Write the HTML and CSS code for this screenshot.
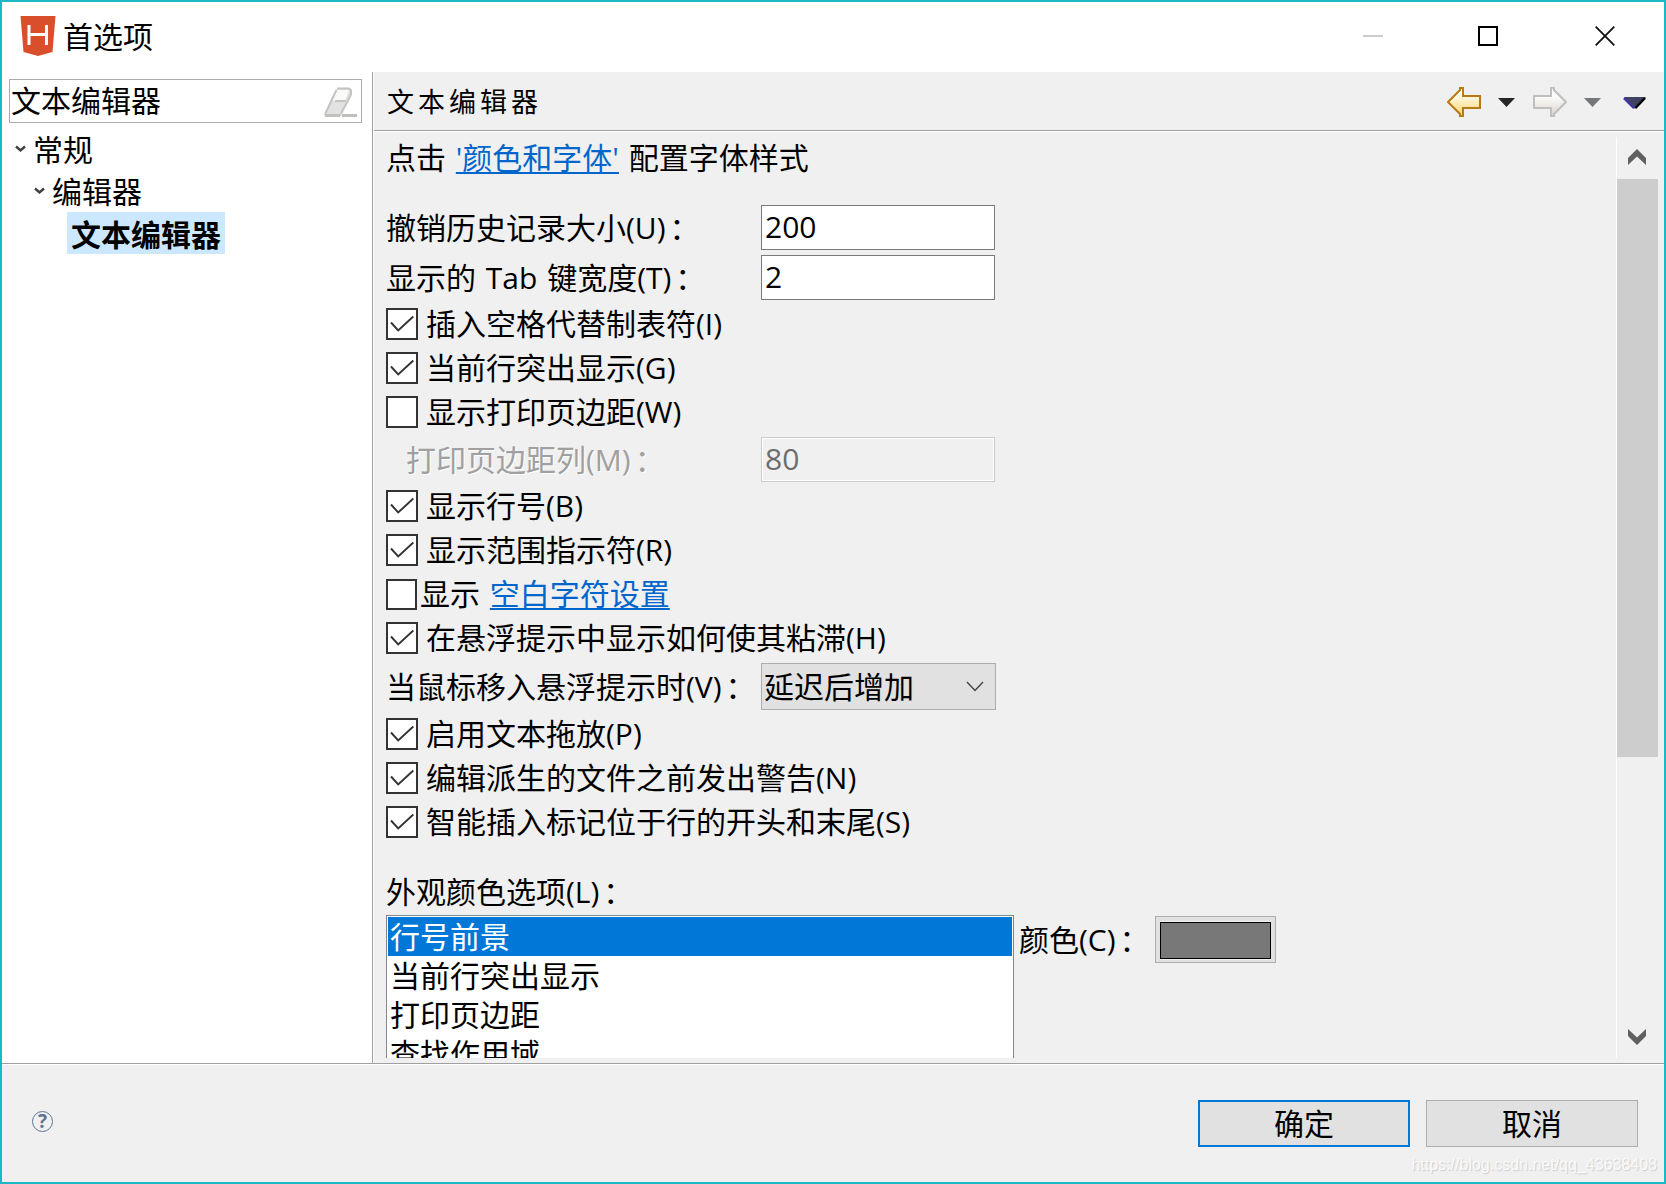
FILE: index.html
```
<!DOCTYPE html>
<html lang="zh-CN">
<head>
  <meta charset="UTF-8" />
  <meta name="viewport" content="width=device-width, initial-scale=1.0"/>
  <title>首选项</title>
  <link rel="stylesheet" href="styles.css">
</head>
<body>
  <svg width="0" height="0" class="defs">
    <symbol id="tick" viewBox="0 0 28 28"><path d="M3 12.500l7.200 8L25.300 6.500" fill="none" stroke="#333" stroke-width="1.900"/></symbol>
  </svg>
  <div class="window">
    <div class="titlebar">
      <svg class="logo" width="36" height="40" viewBox="0 0 36 40">
        <path d="M.5 0h35l-3 36L18 40 3.500 36z" fill="#d94f2b"/>
        <path d="M9 9v20M26.500 9v20M9 18.500h17.500" fill="none" stroke="#fff" stroke-width="3"/>
      </svg>
      <span class="title">首选项</span>
      <div class="winbtns">
        <svg width="20" height="20" viewBox="0 0 20 20"><path d="M0 10h20" stroke="#ccc" stroke-width="2"/></svg>
        <svg width="20" height="20" viewBox="0 0 20 20"><path d="M1 1h18v18H1z" fill="none" stroke="#000" stroke-width="2"/></svg>
        <svg width="20" height="20" viewBox="0 0 20 20"><path d="M.7.7l18.600 18.600M19.300.7L.7 19.300" fill="none" stroke="#111" stroke-width="1.800"/></svg>
      </div>
    </div>

    <div class="main">
      <div class="sidebar">
        <div class="search">
          <span>文本编辑器</span>
          <svg width="33" height="31" viewBox="0 0 33 31">
            <path d="M13 1h12l2 2-2 9-8 17H1v-3L10 9z" fill="#e2e2e0"/>
            <path d="M13 3h12l-4 11H9z" fill="#fafafa"/>
            <path d="M13 1.500h12l2 2v4l-3 6-7 13M12.500 3L9 10l-5 11-2.500 5v2H17M11 14h11" fill="none" stroke="#c4c4c0" stroke-width="2"/>
            <path d="M1 28.500h15M18 28.500h15" stroke="#c0c0bc" stroke-width="3"/>
          </svg>
        </div>
        <div class="tree">
          <div class="node"><svg width="11" height="8" viewBox="0 0 11 8"><path d="M1 1.500l4.500 4 4.500-4" fill="none" stroke="#404040" stroke-width="2.400"/></svg><span>常规</span></div>
          <div class="node level2"><svg width="11" height="8" viewBox="0 0 11 8"><path d="M1 1.500l4.500 4 4.500-4" fill="none" stroke="#404040" stroke-width="2.400"/></svg><span>编辑器</span></div>
          <div class="node level3"><span class="current">文本编辑器</span></div>
        </div>
      </div>

      <div class="page">
        <div class="page-head">
          <h1>文本编辑器</h1>
          <div class="nav">
            <svg width="34" height="30" viewBox="0 0 34 30">
              <defs>
                <linearGradient id="gold" x1="0" y1="0" x2="0" y2="1"><stop offset="0.2" stop-color="#fffef4"/><stop offset="0.9" stop-color="#fbd978"/></linearGradient>
                <linearGradient id="pale" x1="0" y1="0" x2="0" y2="1"><stop offset="0.3" stop-color="#fdfdfc"/><stop offset="0.9" stop-color="#dedad0"/></linearGradient>
              </defs>
              <path d="M1 15L13 3V1h3v8h17v12H16v8h-3v-2z" fill="url(#gold)" stroke="#b87a14" stroke-width="2"/>
            </svg>
            <svg class="drop" width="17" height="9" viewBox="0 0 17 9"><path d="M0 0h17L8.500 9z" fill="#262626"/></svg>
            <svg class="fwd" width="34" height="30" viewBox="0 0 34 30"><path d="M33 15L21 3V1h-3v8H1v12h17v8h3v-2z" fill="url(#pale)" stroke="#bfbfbf" stroke-width="2"/></svg>
            <svg class="drop" width="17" height="9" viewBox="0 0 17 9"><path d="M0 0h17L8.500 9z" fill="#76777a"/></svg>
            <svg class="menu" width="24" height="12" viewBox="0 0 24 12"><path d="M1 0h22L12 12z" fill="#414162"/><path d="M1 1l10 10" stroke="#4038a0" stroke-width="2.500"/><path d="M22 1L12.500 11" stroke="#000" stroke-width="2.500"/></svg>
          </div>
        </div>

        <div class="page-body">
          <div class="form">
            <div class="linkrow">点击 <a>'颜色和字体'</a> 配置字体样式</div>
            <div class="field"><label>撤销历史记录大小(U)<b>：</b></label><div class="input">200</div></div>
            <div class="field"><label>显示的 Tab 键宽度(T)<b>：</b></label><div class="input">2</div></div>
            <div class="checks">
              <div class="check"><i><svg><use href="#tick"/></svg></i>插入空格代替制表符(I)</div>
              <div class="check"><i><svg><use href="#tick"/></svg></i>当前行突出显示(G)</div>
              <div class="check"><i></i>显示打印页边距(W)</div>
            </div>
            <div class="field disabled"><label>打印页边距列(M)<b>：</b></label><div class="input">80</div></div>
            <div class="checks">
              <div class="check"><i><svg><use href="#tick"/></svg></i>显示行号(B)</div>
              <div class="check"><i><svg><use href="#tick"/></svg></i>显示范围指示符(R)</div>
              <div class="check tight"><i></i>显示&nbsp;<a>空白字符设置</a></div>
              <div class="check"><i><svg><use href="#tick"/></svg></i>在悬浮提示中显示如何使其粘滞(H)</div>
            </div>
            <div class="field combo-field">
              <label>当鼠标移入悬浮提示时(V)<b>：</b></label>
              <div class="combo">延迟后增加<svg width="18" height="11" viewBox="0 0 18 11"><path d="M1 1l8 8.500L17 1" fill="none" stroke="#444" stroke-width="1.400"/></svg></div>
            </div>
            <div class="checks">
              <div class="check"><i><svg><use href="#tick"/></svg></i>启用文本拖放(P)</div>
              <div class="check"><i><svg><use href="#tick"/></svg></i>编辑派生的文件之前发出警告(N)</div>
              <div class="check"><i><svg><use href="#tick"/></svg></i>智能插入标记位于行的开头和末尾(S)</div>
            </div>
            <div class="list-label">外观颜色选项(L)<b>：</b></div>
            <div class="colors">
              <div class="list">
                <div class="item selected">行号前景</div>
                <div class="item">当前行突出显示</div>
                <div class="item">打印页边距</div>
                <div class="item">查找作用域</div>
              </div>
              <div class="color-label">颜色(C)<b>：</b></div>
              <div class="color-btn"><div class="swatch"></div></div>
            </div>
          </div>
          <div class="scrollbar">
            <svg width="18" height="16" viewBox="0 0 18 16"><path d="M0 9l9-9 9 9v7L9 7.500 0 16z" fill="#606060"/></svg>
            <div class="thumb"></div>
            <svg class="down" width="18" height="16" viewBox="0 0 18 16"><path d="M0 7l9 9 9-9V0L9 8.500 0 0z" fill="#606060"/></svg>
          </div>
        </div>
      </div>
    </div>

    <div class="footer">
      <div class="help">?</div>
      <div class="btn primary">确定</div>
      <div class="btn">取消</div>
      <div class="watermark">https://blog.csdn.net/qq_43638408</div>
    </div>
  </div>
</body>
</html>
```
FILE: styles.css
```
* {
  box-sizing: border-box;
}
body {
  margin: 0;
  font-family: "Open Sans", "Noto Sans CJK SC", sans-serif;
  font-size: 30px;
  line-height: 40px;
  word-spacing: 2px;
  color: #000;
  white-space: nowrap;
}
svg {
  display: block;
  flex: none;
}
.defs {
  position: absolute;
}
.window {
  width: 1666px;
  height: 1184px;
  border: 2px solid #19b9c6;
  background: #f0f0f0;
  display: flex;
  flex-direction: column;
  overflow: hidden;
  position: relative;
}
.titlebar {
  height: 70px;
  flex: none;
  background: #fff;
  display: flex;
  align-items: center;
  padding: 0 0 2px 18px;
}
.title {
  margin-left: 7px;
  padding-top: 1px;
}
.winbtns {
  margin-left: auto;
  display: flex;
  gap: 97px;
  padding-right: 49px;
}
.winbtns svg:first-child {
  margin-right: -2px;
}
.main {
  height: 991px;
  flex: none;
  display: flex;
}
.sidebar {
  width: 371px;
  flex: none;
  background: #fff;
  border-right: 1px solid #a0a0a0;
  padding: 7px 10px 0 7px;
}
.search {
  height: 44px;
  border: 1px solid #ababab;
  display: flex;
  align-items: center;
  justify-content: space-between;
  padding: 0 4px 0 1px;
}
.search svg {
  margin-top: 2px;
}
.tree {
  padding-top: 5px;
}
.node {
  height: 42px;
  display: flex;
  align-items: center;
  padding-left: 6px;
}
.node svg {
  margin-right: 7px;
}
.node span {
  padding-top: 1px;
}
.level2 {
  padding-left: 25px;
}
.level3 {
  padding-left: 58px;
}
.node .current {
  background: #cce8ff;
  font-weight: bold;
  height: 42px;
  width: 158px;
  padding: 3px 0 0 4px;
}
.page {
  flex: 1;
  display: flex;
  flex-direction: column;
  border-left: 1px solid #fff;
}
.page-head {
  height: 60px;
  flex: none;
  border-bottom: 1px solid #fff;
  box-shadow: inset 0 -1px #a0a0a0;
  display: flex;
  align-items: center;
  justify-content: space-between;
  padding: 1px 17px 0 13px;
}
h1 {
  margin: 0 0 1px;
  font-size: 27px;
  font-weight: normal;
  letter-spacing: 4px;
}
.nav {
  display: flex;
  align-items: center;
}
.drop {
  margin-left: 17px;
}
.fwd {
  margin-left: 18px;
}
.menu {
  margin: 2px 0 0 22px;
}
.page-body {
  height: 931px;
  padding: 5px 5px 5px 12px;
  display: flex;
}
.form {
  flex: 1;
  overflow: hidden;
}
.linkrow {
  height: 42px;
  line-height: 41px;
  margin-bottom: 26px;
}
a {
  color: #0066cc;
  text-decoration: underline;
  text-decoration-thickness: 2px;
  text-underline-offset: 3px;
}
b {
  font-weight: normal;
  margin-left: 4px;
}
.field {
  height: 45px;
  display: flex;
  align-items: center;
  margin-bottom: 5px;
}
.field label {
  width: 375px;
  flex: none;
  padding-top: 1px;
}
.input {
  width: 234px;
  height: 45px;
  line-height: 42px;
  border: 1px solid #7a7a7a;
  background: #fff;
  padding-left: 3px;
}
.field + .checks {
  margin-top: -3px;
}
.check {
  height: 44px;
  display: flex;
  align-items: center;
}
.check i {
  width: 32px;
  height: 32px;
  flex: none;
  margin-right: 8px;
  border: 2px solid #333;
  background: #fff;
}
.check i svg {
  width: 28px;
  height: 28px;
}
.check.tight i {
  width: 31px;
  height: 31px;
  margin-right: 3px;
}
.checks + .field {
  margin-top: 3px;
}
.disabled label {
  padding-left: 20px;
  color: #a0a0a0;
  text-shadow: 1px 1px #fff;
}
.disabled .input {
  background: #f0f0f0;
  border-color: #ccc;
  box-shadow: inset 0 0 0 1px #fff;
  color: #6d6d6d;
}
.combo-field {
  height: 47px;
}
.combo {
  width: 235px;
  height: 47px;
  border: 1px solid #adadad;
  background: #e1e1e1;
  display: flex;
  align-items: center;
  justify-content: space-between;
  padding: 0 11px 0 2px;
}
.list-label {
  margin: 28px 0 3px;
}
.colors {
  display: flex;
  align-items: flex-start;
}
.list {
  width: 628px;
  height: 160px;
  border: 1px solid #828790;
  padding: 1px;
  background: #fff;
}
.item {
  height: 39px;
  line-height: 39px;
  padding-left: 2px;
}
.selected {
  background: #0078d7;
  color: #fff;
}
.color-label {
  width: 141px;
  padding: 5px 0 0 5px;
}
.color-btn {
  width: 121px;
  height: 47px;
  margin-top: 1px;
  border: 1px solid #adadad;
  background: #e1e1e1;
  padding: 4px;
}
.swatch {
  height: 37px;
  margin-top: 1px;
  background: #787878;
  border: 1px solid #000;
  box-shadow: 0 -1px #f0f0f0, 0 1px #f0f0f0;
}
.scrollbar {
  width: 43px;
  border-left: 1px solid #fff;
  display: flex;
  flex-direction: column;
  padding: 12px 0 13px;
}
.scrollbar svg {
  margin-left: 11px;
}
.thumb {
  width: 41px;
  height: 578px;
  background: #cdcdcd;
  margin-top: 14px;
}
.down {
  margin-top: auto;
}
.footer {
  flex: 1;
  border-top: 1px solid #a0a0a0;
  box-shadow: inset 0 1px #fff;
  display: flex;
  justify-content: flex-end;
  align-items: flex-start;
  gap: 16px;
  padding: 36px 26px 0 30px;
}
.help {
  width: 21px;
  height: 21px;
  margin: 11px auto 0 0;
  border: 1px solid #5f7494;
  border-radius: 50%;
  font: bold 19px/19px "Open Sans", sans-serif;
  text-align: center;
  color: #5f7494;
}
.btn {
  width: 212px;
  height: 47px;
  line-height: 45px;
  border: 1px solid #adadad;
  background: #e1e1e1;
  text-align: center;
}
.primary {
  border: 2px solid #0078d7;
  line-height: 43px;
}
.watermark {
  position: absolute;
  right: 7px;
  bottom: 6px;
  font: 16px/22px "Liberation Sans", sans-serif;
  color: #fafafa;
  text-shadow: 1px 1px 1px #ccc;
}
```
